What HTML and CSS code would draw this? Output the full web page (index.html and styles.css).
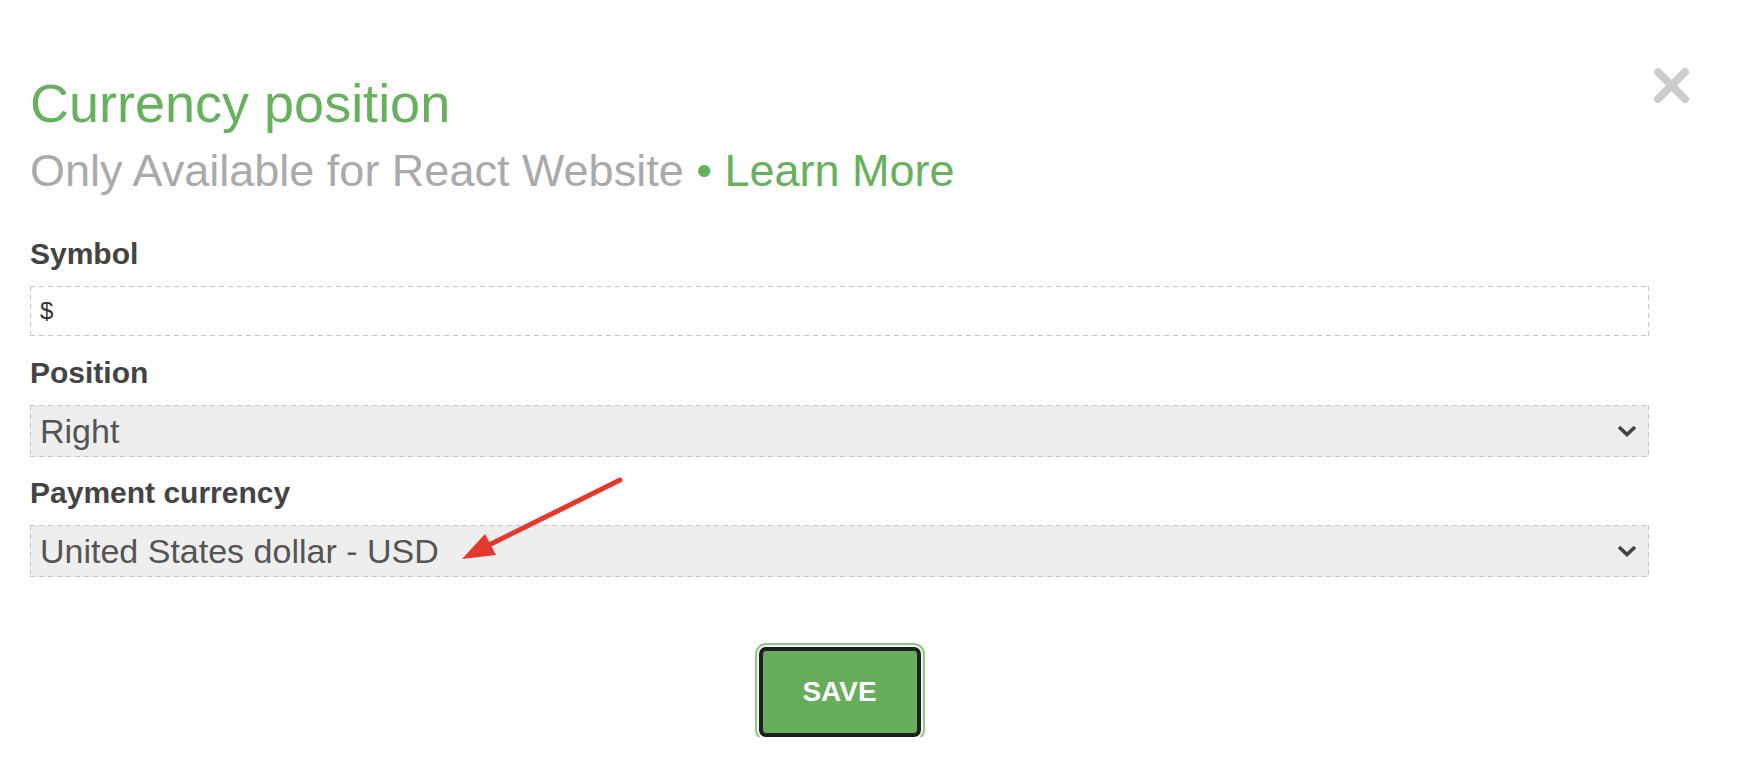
FILE: index.html
```html
<!DOCTYPE html>
<html lang="en">
<head>
    <meta charset="UTF-8">
    <meta name="viewport" content="width=device-width, initial-scale=1.0">
    <title>Currency position</title>
    <link rel="stylesheet" href="styles.css">
</head>
<body>
    <div class="modal">
        <button class="close" title="Close">
            <svg width="37" height="37" viewBox="0 0 37 37">
                <path d="M5 5 L32 32 M32 5 L5 32" stroke="#cccccc" stroke-width="8" stroke-linecap="round"/>
            </svg>
        </button>

        <h1>Currency position</h1>
        <p class="sub">Only Available for React Website <a href="#">&bull; Learn More</a></p>

        <form class="form">
            <label for="symbol">Symbol</label>
            <input type="text" id="symbol" value="$">

            <label for="position">Position</label>
            <div class="select-wrap">
                <select id="position">
                    <option>Right</option>
                    <option>Left</option>
                </select>
                <svg class="chevron" width="20" height="12" viewBox="0 0 20 12">
                    <path d="M2 2 L10 9.5 L18 2" fill="none" stroke="#444" stroke-width="3.6"/>
                </svg>
            </div>

            <label for="currency">Payment currency</label>
            <div class="select-wrap">
                <select id="currency">
                    <option>United States dollar - USD</option>
                    <option>Euro - EUR</option>
                </select>
                <svg class="chevron" width="20" height="12" viewBox="0 0 20 12">
                    <path d="M2 2 L10 9.5 L18 2" fill="none" stroke="#444" stroke-width="3.6"/>
                </svg>
                <!-- annotation arrow -->
                <svg class="arrow" width="175" height="95" viewBox="0 0 175 95">
                    <line x1="165" y1="10" x2="34" y2="75" stroke="#e5392c" stroke-width="5" stroke-linecap="round"/>
                    <polygon points="7,89 41,85 30,64" fill="#e5392c"/>
                </svg>
            </div>

            <div class="actions">
                <button type="button" class="save">SAVE</button>
            </div>
        </form>
    </div>
</body>
</html>
```

FILE: styles.css
```css
body {
    margin: 0;
    background: #ffffff;
    font-family: "Liberation Sans", Arial, sans-serif;
    color: #444444;
}
.modal {
    position: relative;
    padding: 71px 91px 0 30px;
}

.close {
    position: absolute;
    left: 1653px;
    top: 67px;
    padding: 0;
    border: 0;
    background: none;
    cursor: pointer;
    line-height: 0;
}

h1 {
    margin: 0;
    font-size: 54px;
    line-height: 64px;
    font-weight: normal;
    color: #67b05e;
}
.sub {
    margin: 9px 0 0 0;
    font-size: 45px;
    line-height: 54px;
    color: #aaaaaa;
}
.sub a {
    color: #67b05e;
    text-decoration: none;
}

.form {
    display: flex;
    flex-direction: column;
    margin-top: 38px;
}
.form label {
    display: block;
    font-size: 30px;
    line-height: 36px;
    font-weight: 700;
    color: #444444;
    margin-bottom: 14px;
}

/* dashed frame with longer dashes than the browser draws */
.form input,
.form select {
    display: block;
    width: 100%;
    box-sizing: border-box;
    border: 0;
    border-radius: 0;
    font-family: "Liberation Sans", Arial, sans-serif;
    outline: none;
    background:
        repeating-linear-gradient(90deg, #c6c6c6 0 5px, transparent 5px 9px) top left / 100% 1px no-repeat,
        repeating-linear-gradient(90deg, #c6c6c6 0 5px, transparent 5px 9px) bottom left / 100% 1px no-repeat,
        repeating-linear-gradient(180deg, #c6c6c6 0 5px, transparent 5px 9px) top left / 1px 100% no-repeat,
        repeating-linear-gradient(180deg, #c6c6c6 0 5px, transparent 5px 9px) top right / 1px 100% no-repeat;
}
.form input {
    height: 50px;
    padding: 0 10px;
    font-size: 24px;
    color: #333333;
    background-color: #ffffff;
    margin-bottom: 19px;
}
.select-wrap {
    position: relative;
    margin-bottom: 18px;
}
.form select {
    height: 52px;
    padding: 0 40px 0 10px;
    font-size: 34px;
    color: #555555;
    background-color: #eeeeee;
    appearance: none;
    -webkit-appearance: none;
}
.chevron {
    position: absolute;
    right: 12px;
    top: 20px;
    pointer-events: none;
}
.arrow {
    position: absolute;
    left: 425px;
    top: -55px;
    pointer-events: none;
}

.actions {
    display: flex;
    justify-content: center;
    padding-top: 52px;
}
.save {
    width: 162px;
    height: 90px;
    border: 4px solid #1e1e1e;
    border-radius: 7px;
    background: #67ad5b;
    color: #ffffff;
    font-family: "Liberation Sans", Arial, sans-serif;
    font-size: 28px;
    font-weight: 700;
    cursor: pointer;
    box-shadow: 0 0 0 2px #f0f7ee, 0 0 0 4px #8cc784;
}
```
